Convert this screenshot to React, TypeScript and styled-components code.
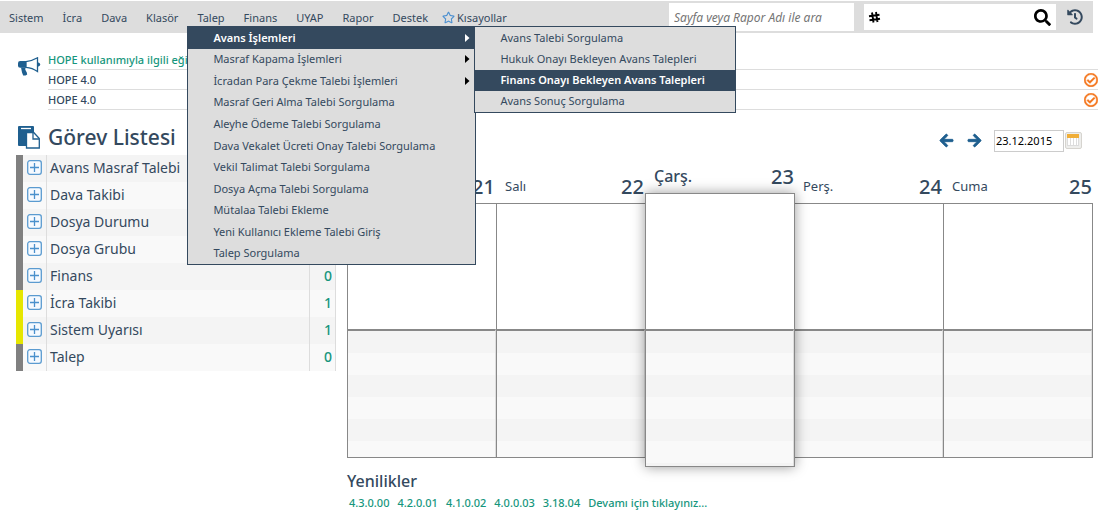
import React from "react";
import styled, { createGlobalStyle, css } from "styled-components";
import {
  FaArrowLeft,
  FaArrowRight,
  FaHistory,
  FaRegCheckCircle,
  FaRegStar,
  FaSearch,
} from "react-icons/fa";

const navy = "#34495e";
const blue = "#1f5f8f";
const green = "#16967d";
const panel = "#dddddd";
const line = "#888888";

const GlobalStyle = createGlobalStyle`
  *, *::before, *::after { box-sizing: border-box; }
  body {
    margin: 0;
    background: #ffffff;
    color: ${navy};
    font-family: "Noto Sans", "Open Sans", sans-serif;
    font-size: 12px;
  }
  ul, h1, h2 { margin: 0; padding: 0; list-style: none; font-weight: 500; }
  button, input { font-family: inherit; color: inherit; }
  button { border: 0; padding: 0; background: none; cursor: pointer; }
  a { color: inherit; text-decoration: none; }
`;

const Page = styled.div`
  padding-top: 1px;
`;

const TopBar = styled.header`
  display: flex;
  align-items: center;
  height: 32px;
  margin-right: 27px;
  background: ${panel};
`;

const MainNav = styled.ul`
  display: flex;
  flex: 1;
  gap: 1px;
`;

const NavItem = styled.li`
  position: relative;
`;

const NavButton = styled.button<{ $tight?: boolean }>`
  display: flex;
  align-items: center;
  gap: 2px;
  height: 32px;
  padding: 0 ${(p) => (p.$tight ? 4 : 9)}px;
  font-size: 11px;
  svg { color: #4a8fd0; }
`;

const Menu = styled.ul<{ $sub?: boolean }>`
  position: absolute;
  z-index: ${(p) => (p.$sub ? 11 : 10)};
  top: ${(p) => (p.$sub ? "-1px" : "25px")};
  left: ${(p) => (p.$sub ? "286px" : "-1px")};
  display: flex;
  flex-direction: column;
  width: ${(p) => (p.$sub ? 262 : 289)}px;
  height: ${(p) => (p.$sub ? 87 : 239)}px;
  border: 1px solid ${navy};
  background: ${panel};
`;

const MenuItem = styled.li<{ $active?: boolean }>`
  position: relative;
  display: flex;
  flex: 1;
  min-height: 0;
  ${(p) =>
    p.$active &&
    css`
      background: ${navy};
    `}
`;

const MenuLink = styled.a<{ $active?: boolean }>`
  display: flex;
  flex: 1;
  align-items: center;
  justify-content: space-between;
  padding: 0 5px 0 25px;
  color: ${(p) => (p.$active ? "#ffffff" : navy)};
  font-size: 11px;
  font-weight: ${(p) => (p.$active ? 600 : 400)};
  line-height: 20px;
  white-space: nowrap;
  svg { color: ${(p) => (p.$active ? "#ffffff" : "#000000")}; }
`;

const PageSearch = styled.input`
  width: 185px;
  height: 28px;
  margin-right: 10px;
  padding: 0 5px;
  border: 0;
  background: #ffffff;
  font-size: 12px;
  font-style: italic;
  &::placeholder { color: #757575; opacity: 1; }
`;

const NumberSearch = styled.form`
  display: flex;
  align-items: center;
  width: 192px;
  height: 26px;
  padding: 0 5px 0 4px;
  background: #ffffff;
  color: #000000;
`;

const NumberInput = styled.input`
  flex: 1;
  min-width: 0;
  border: 0;
  outline: 0;
  background: transparent;
  font-size: 12px;
`;

const IconButton = styled.button`
  display: flex;
  align-items: center;
  justify-content: center;
`;

const HistoryButton = styled(IconButton)`
  width: 37px;
  height: 32px;
`;

const News = styled.section`
  display: flex;
  margin: 17px 22px 0 17px;
`;

const NewsIcon = styled.div`
  width: 31px;
  padding-top: 7px;
`;

const NewsList = styled.ul`
  flex: 1;
`;

const NewsRow = styled.li<{ $link?: boolean }>`
  display: flex;
  align-items: center;
  justify-content: space-between;
  height: 20px;
  border-bottom: 1px solid ${panel};
  color: ${(p) => (p.$link ? green : navy)};
  font-size: 11px;
  svg { display: block; color: #f47216; }
`;

const Content = styled.main`
  display: grid;
  grid-template-columns: 320px 1fr;
  column-gap: 11px;
  margin: 14px 27px 0 16px;
`;

const TaskTitle = styled.h1`
  display: flex;
  align-items: center;
  gap: 8px;
  height: 31px;
  padding-left: 2px;
  padding-bottom: 4px;
  font-size: 21px;
  line-height: 27px;
`;

const TaskTable = styled.table`
  width: 100%;
  table-layout: fixed;
  border-collapse: separate;
  border-spacing: 0;
  font-size: 14px;
`;

const TaskRow = styled.tr`
  height: 27px;
  background: #f9f9f9;
  &:nth-child(odd) { background: #f4f4f4; }
  td { padding: 0 0 2px; border-right: 1px solid ${panel}; }
`;

const StatusCell = styled.td<{ $alert: boolean }>`
  width: 31px;
  border-left: 7px solid ${(p) => (p.$alert ? "#e6e600" : "#808080")};
`;

const ExpandButton = styled(IconButton)`
  width: 22px;
  height: 23px;
`;

const TaskName = styled.span`
  display: block;
  padding-left: 3px;
  line-height: 20px;
`;

const CountCell = styled.td`
  width: 26px;
  color: ${green};
  font-weight: 500;
  text-align: right;
  a { padding-right: 3px; }
`;

const WeekTools = styled.div`
  display: flex;
  align-items: center;
  justify-content: flex-end;
  height: 33px;
  padding-right: 11px;
  color: ${blue};
`;

const ArrowButton = styled(IconButton)`
  width: 28px;
  height: 22px;
  svg { stroke: currentColor; stroke-width: 28px; overflow: visible; }
`;

const DateInput = styled.input`
  width: 70px;
  height: 22px;
  margin: 0 1px 0 6px;
  padding: 0 1px;
  border: 1px solid #cccccc;
  color: #000000;
  font-size: 11px;
`;

const Week = styled.div`
  display: grid;
  grid-template-columns: repeat(5, 1fr);
  padding: 6px 1px 0 0;
`;

const Day = styled.section<{ $today: boolean }>`
  display: flex;
  flex-direction: column;
  height: 304px;
  padding: ${(p) => (p.$today ? 0 : "10px 0 9px")};
  &:last-child { margin-right: -1px; }
  ${(p) =>
    p.$today &&
    css`
      position: relative;
      z-index: 1;
      margin-right: -1px;
    `}
`;

const DayHead = styled.div<{ $today: boolean }>`
  display: flex;
  align-items: center;
  justify-content: space-between;
  height: 30px;
  padding: 0 1px 4px 9px;
  font-size: ${(p) => (p.$today ? 16 : 13)}px;
  font-weight: ${(p) => (p.$today ? 500 : 400)};
`;

const DayNumber = styled.span`
  margin-left: auto;
  font-size: 20px;
  font-weight: 500;
`;

const DayBody = styled.div<{ $today: boolean; $last: boolean }>`
  display: flex;
  flex: 1;
  flex-direction: column;
  border: 1px solid ${line};
  border-right-width: ${(p) => (p.$today || p.$last ? 1 : 0)}px;
  background: #ffffff;
  box-shadow: ${(p) => (p.$today ? "0 0 12px rgba(0, 0, 0, 0.4)" : "none")};
`;

const DayAgenda = styled.div<{ $today: boolean }>`
  height: ${(p) => (p.$today ? 135 : 125)}px;
`;

const DayTasks = styled.div`
  flex: 1;
  border-top: 2px solid ${line};
  border-right: 1px solid ${panel};
  background: repeating-linear-gradient(#f4f4f4 0 22px, #f9f9f9 22px 44px);
`;

const Updates = styled.section`
  padding-top: 2px;
`;

const UpdatesTitle = styled.h2`
  font-size: 16px;
  line-height: 24px;
`;

const VersionList = styled.ul`
  display: flex;
  gap: 8px;
  padding-left: 2px;
  color: ${green};
  font-size: 11px;
  line-height: 20px;
`;

const Megaphone = () => (
  <svg width="24" height="20" viewBox="0 0 24 20" aria-hidden="true">
    <path d="M1 6.200Q1 4 3.200 4H9v6.800H3.200Q1 10.800 1 8.800z" fill={blue} />
    <path d="M4 10.500h4.500l-.2 2.300 1.500 2.600.4 2.200-1.600.9H6.200L5 15.500z" fill={blue} />
    <path d="M9 4.700C13.500 4.200 17.500 2.500 20.500.8v13.700C17.500 12.300 14 10.700 9 10.300z" fill="#ffffff" stroke={blue} strokeWidth="1.300" />
    <path d="M20 5.500h1.500q1.700.4 1.700 2t-1.700 2H20z" fill={blue} />
  </svg>
);

const Paste = () => (
  <svg width="22" height="23" viewBox="0 0 22 23" aria-hidden="true">
    <path d="M1 0h14q1 0 1 1v18q0 1-1 1H1q-1 0-1-1V1q0-1 1-1z" fill={blue} />
    <path d="M3 2.500h10" stroke="#ffffff" strokeWidth="1.300" />
    <path d="M8.500 6.500h7.200l5.600 6V22H8.500z" fill="#ffffff" stroke={blue} strokeWidth="1.300" />
    <path d="M15 7v6h6" fill="none" stroke={blue} strokeWidth="1.300" />
  </svg>
);

const Hash = () => (
  <svg width="13" height="13" viewBox="0 0 13 13" aria-hidden="true">
    <path
      d="M4 1.500l1.500 10M8 1l1.500 10M1 5.300l10.500-1.600M1.500 9.300L12 7.700"
      fill="none"
      stroke="currentColor"
      strokeWidth="1.900"
    />
  </svg>
);

const PlusSquare = () => (
  <svg width="15" height="15" viewBox="0 0 15 15" aria-hidden="true">
    <rect x=".7" y=".7" width="13.600" height="13.600" rx="2.200" fill="#f6faff" stroke="#5b9bd0" strokeWidth="1.300" />
    <path d="M7.500 3v9M3 7.500h9" stroke="#4a90cc" strokeWidth="1.300" />
  </svg>
);

const Caret = () => (
  <svg width="5" height="8" viewBox="0 0 5 8" aria-hidden="true">
    <path d="M0 0l4.500 4L0 8z" fill="currentColor" />
  </svg>
);

const CalendarIcon = () => (
  <svg width="17" height="17" viewBox="0 0 17 17" aria-hidden="true">
    <rect x=".5" y=".5" width="16" height="16" rx="1.500" fill="#eeeeec" stroke="#d6d4cf" />
    <rect x="2.500" y="5" width="11" height="8.500" fill="#ffffff" stroke="#dcdcdc" />
    <path d="M5.500 6v7M8.500 6v7M11.500 6v7" stroke="#dddddd" />
    <rect x="2" y="2" width="12" height="4" fill="#f0ae38" />
  </svg>
);

const navBefore = ["Sistem", "İcra", "Dava", "Klasör"];
const navAfter = ["Finans", "UYAP", "Rapor", "Destek"];

const requestMenu = [
  { label: "Masraf Kapama İşlemleri", more: true },
  { label: "İcradan Para Çekme Talebi İşlemleri", more: true },
  { label: "Masraf Geri Alma Talebi Sorgulama" },
  { label: "Aleyhe Ödeme Talebi Sorgulama" },
  { label: "Dava Vekalet Ücreti Onay Talebi Sorgulama" },
  { label: "Vekil Talimat Talebi Sorgulama" },
  { label: "Dosya Açma Talebi Sorgulama" },
  { label: "Mütalaa Talebi Ekleme" },
  { label: "Yeni Kullanıcı Ekleme Talebi Giriş" },
  { label: "Talep Sorgulama" },
];

const advanceMenu = [
  { label: "Avans Talebi Sorgulama" },
  { label: "Hukuk Onayı Bekleyen Avans Talepleri" },
  { label: "Finans Onayı Bekleyen Avans Talepleri", active: true },
  { label: "Avans Sonuç Sorgulama" },
];

const tasks: { name: string; count?: number }[] = [
  { name: "Avans Masraf Talebi" },
  { name: "Dava Takibi" },
  { name: "Dosya Durumu" },
  { name: "Dosya Grubu" },
  { name: "Finans", count: 0 },
  { name: "İcra Takibi", count: 1 },
  { name: "Sistem Uyarısı", count: 1 },
  { name: "Talep", count: 0 },
];

const days: { name?: string; date: number }[] = [
  { date: 21 },
  { name: "Salı", date: 22 },
  { name: "Çarş.", date: 23 },
  { name: "Perş.", date: 24 },
  { name: "Cuma", date: 25 },
];

const today = 23;

const versions = ["4.3.0.00", "4.2.0.01", "4.1.0.02", "4.0.0.03", "3.18.04", "Devamı için tıklayınız..."];

const NavEntry = ({ label }: { label: string }) => (
  <NavItem>
    <NavButton type="button">{label}</NavButton>
  </NavItem>
);

export default function App() {
  return (
    <Page>
      <GlobalStyle />
      <TopBar>
        <MainNav>
          {navBefore.map((label) => (
            <NavEntry key={label} label={label} />
          ))}
          <NavItem>
            <NavButton type="button" aria-expanded="true">Talep</NavButton>
            <Menu>
              <MenuItem $active>
                <MenuLink href="#" $active>
                  Avans İşlemleri
                  <Caret />
                </MenuLink>
                <Menu $sub>
                  {advanceMenu.map((item) => (
                    <MenuItem key={item.label} $active={item.active}>
                      <MenuLink href="#" $active={item.active}>{item.label}</MenuLink>
                    </MenuItem>
                  ))}
                </Menu>
              </MenuItem>
              {requestMenu.map((item) => (
                <MenuItem key={item.label}>
                  <MenuLink href="#">
                    {item.label}
                    {item.more && <Caret />}
                  </MenuLink>
                </MenuItem>
              ))}
            </Menu>
          </NavItem>
          {navAfter.map((label) => (
            <NavEntry key={label} label={label} />
          ))}
          <NavItem>
            <NavButton type="button" $tight>
              <FaRegStar size={13} />
              Kısayollar
            </NavButton>
          </NavItem>
        </MainNav>
        <PageSearch aria-label="Sayfa veya Rapor Adı" placeholder="Sayfa veya Rapor Adı ile ara" />
        <NumberSearch onSubmit={(e) => e.preventDefault()}>
          <Hash />
          <NumberInput aria-label="Numara" />
          <IconButton type="submit" aria-label="Ara">
            <FaSearch size={17} />
          </IconButton>
        </NumberSearch>
        <HistoryButton type="button" aria-label="Geçmiş">
          <FaHistory size={16} />
        </HistoryButton>
      </TopBar>

      <News>
        <NewsIcon>
          <Megaphone />
        </NewsIcon>
        <NewsList>
          <NewsRow $link>
            <a href="#">HOPE kullanımıyla ilgili eğitim</a>
          </NewsRow>
          {[1, 2].map((id) => (
            <NewsRow key={id}>
              HOPE 4.0
              <IconButton type="button" aria-label="Okundu">
                <FaRegCheckCircle size={14} stroke="currentColor" strokeWidth={20} />
              </IconButton>
            </NewsRow>
          ))}
        </NewsList>
      </News>

      <Content>
        <div>
          <TaskTitle>
            <Paste />
            Görev Listesi
          </TaskTitle>
          <TaskTable>
            <tbody>
              {tasks.map((task) => (
                <TaskRow key={task.name}>
                  <StatusCell $alert={Boolean(task.count)}>
                    <ExpandButton type="button" aria-label={task.name}>
                      <PlusSquare />
                    </ExpandButton>
                  </StatusCell>
                  <td>
                    <TaskName>{task.name}</TaskName>
                  </td>
                  <CountCell>
                    {task.count !== undefined && <a href="#">{task.count}</a>}
                  </CountCell>
                </TaskRow>
              ))}
            </tbody>
          </TaskTable>
        </div>

        <div>
          <WeekTools>
            <ArrowButton type="button" aria-label="Önceki hafta">
              <FaArrowLeft size={15} />
            </ArrowButton>
            <ArrowButton type="button" aria-label="Sonraki hafta">
              <FaArrowRight size={15} />
            </ArrowButton>
            <DateInput aria-label="Tarih" defaultValue="23.12.2015" />
            <IconButton type="button" aria-label="Takvim">
              <CalendarIcon />
            </IconButton>
          </WeekTools>
          <Week>
            {days.map((day, i) => {
              const isToday = day.date === today;
              return (
                <Day key={day.date} $today={isToday}>
                  <DayHead $today={isToday}>
                    {day.name}
                    <DayNumber>{day.date}</DayNumber>
                  </DayHead>
                  <DayBody $today={isToday} $last={i === days.length - 1}>
                    <DayAgenda $today={isToday} />
                    <DayTasks />
                  </DayBody>
                </Day>
              );
            })}
          </Week>
          <Updates>
            <UpdatesTitle>Yenilikler</UpdatesTitle>
            <VersionList>
              {versions.map((version) => (
                <li key={version}>
                  <a href="#">{version}</a>
                </li>
              ))}
            </VersionList>
          </Updates>
        </div>
      </Content>
    </Page>
  );
}
